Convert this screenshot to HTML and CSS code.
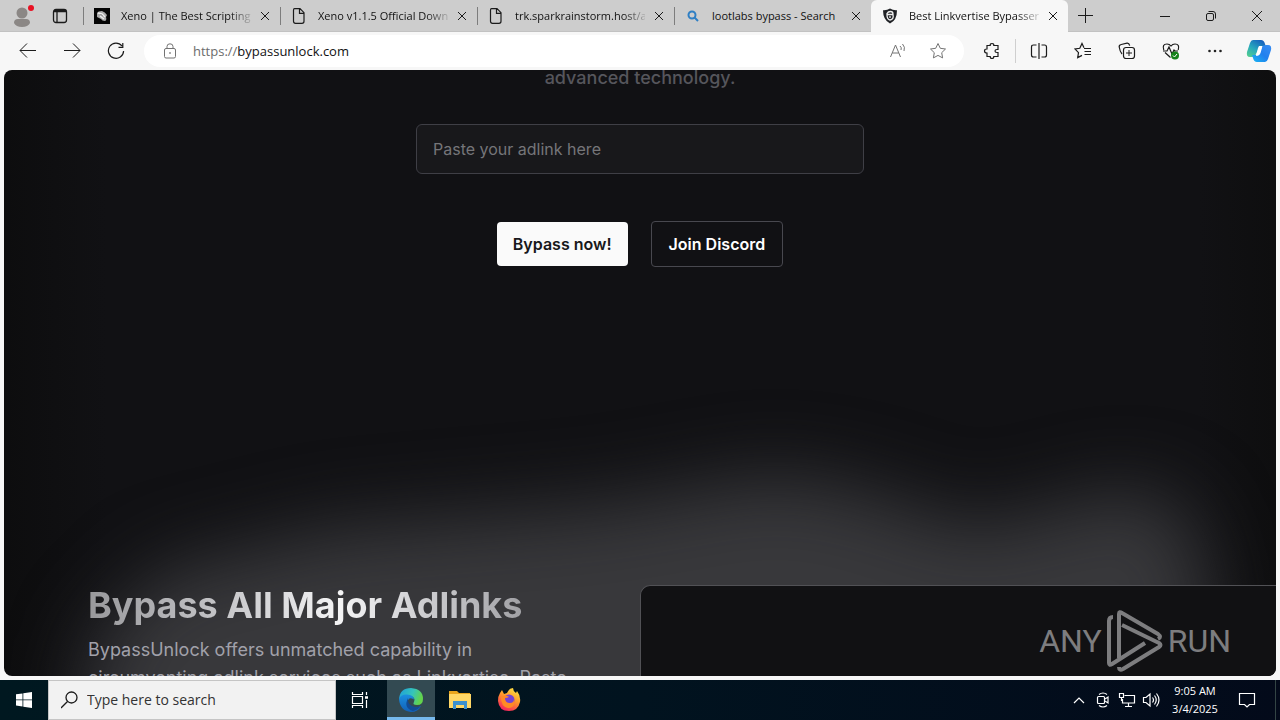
FILE: index.html
```html
<!DOCTYPE html>
<html lang="en">
<head>
<meta charset="utf-8">
<title>Best Linkvertise Bypasser</title>
<link rel="stylesheet" href="styles.css">
</head>
<body>
<header class="tabstrip">
  <button class="profile" aria-label="Profile"><svg width="24" height="28" viewBox="0 0 24 28"><circle cx="12" cy="11" r="5.500" fill="#8b8785"/><path d="M4 21q0-4 4-4h8q4 0 4 4-2 4-8 4t-8-4z" fill="#8b8785"/><circle cx="21" cy="6" r="3" fill="#e81123"/></svg></button>
  <button class="workspace" aria-label="Tab actions"><svg class="ln" width="16" height="16" viewBox="0 0 16 16"><rect x="1.500" y="1.500" width="13" height="13" rx="2.500" stroke-width="1.300"/><path d="M2 3h12" stroke-width="2.500"/><path d="M5 4v10" stroke-width="1.300"/></svg></button>
  <nav class="tabs">
    <div class="tab"><svg width="16" height="16" viewBox="0 0 16 16"><path fill="#050505" d="M0 0h16v16H0z"/><path fill="#aaa" d="M3 5q1-2 5-2 3 1 5 4l-1 2q1 3-1 4-3 0-4-2l-4-2z"/><path stroke="#eee" stroke-width="1.500" d="M4 5l4 1 3 3M6 8l4 3"/></svg><span class="title">Xeno | The Best Scripting</span><button class="close" aria-label="Close tab"><svg class="ln" width="10" height="10" viewBox="0 0 10 10"><path d="M1 1l8 8M9 1L1 9"/></svg></button></div>
    <div class="tab"><svg class="ln" width="16" height="16" viewBox="0 0 16 16"><path stroke-width="1.200" d="M3.500.700h5.500l4 4v8.600q0 2-2 2H4.500q-2 0-2-2v-11q0-1.600 1-1.600zM8.500 1v4.300H13"/></svg><span class="title">Xeno v1.1.5 Official Down</span><button class="close" aria-label="Close tab"><svg class="ln" width="10" height="10" viewBox="0 0 10 10"><path d="M1 1l8 8M9 1L1 9"/></svg></button></div>
    <div class="tab"><svg class="ln" width="16" height="16" viewBox="0 0 16 16"><path stroke-width="1.200" d="M3.500.700h5.500l4 4v8.600q0 2-2 2H4.500q-2 0-2-2v-11q0-1.600 1-1.600zM8.500 1v4.300H13"/></svg><span class="title">trk.sparkrainstorm.host/a</span><button class="close" aria-label="Close tab"><svg class="ln" width="10" height="10" viewBox="0 0 10 10"><path d="M1 1l8 8M9 1L1 9"/></svg></button></div>
    <div class="tab"><svg width="16" height="16" viewBox="0 0 16 16" fill="none" stroke="#2f7fc4" stroke-width="2"><circle cx="7" cy="7" r="3.500"/><path d="M9.500 9.500L13 13"/></svg><span class="title">lootlabs bypass - Search</span><button class="close" aria-label="Close tab"><svg class="ln" width="10" height="10" viewBox="0 0 10 10"><path d="M1 1l8 8M9 1L1 9"/></svg></button></div>
    <div class="tab active"><svg width="16" height="16" viewBox="0 0 16 16"><path fill="#202226" d="M8 .500Q11 2.500 15 2.200q0 10-7 13.300Q1 12 1 2.200 5 2.500 8 .500z"/><path fill="none" stroke="#eee" stroke-width="1.300" d="M5 6V5.500Q6 3.500 8.500 3.500t2.500 2.500M5 6.500h6q1 5-3 5.500-3-.5-3-5.500zM8 8v2"/></svg><span class="title">Best Linkvertise Bypasser</span><button class="close" aria-label="Close tab"><svg class="ln" width="10" height="10" viewBox="0 0 10 10"><path d="M1 1l8 8M9 1L1 9"/></svg></button></div>
  </nav>
  <button class="newtab" aria-label="New tab"><svg class="ln" width="15" height="15" viewBox="0 0 15 15"><path d="M7.500 0v15M0 7.500h15"/></svg></button>
  <div class="winctl">
    <button aria-label="Minimize"><svg class="ln" width="10" height="10" viewBox="0 0 10 10"><path d="M0 5.500h10"/></svg></button>
    <button aria-label="Restore"><svg class="ln" width="10" height="10" viewBox="0 0 10 10"><rect x=".5" y="2.500" width="7" height="7" rx="1.500"/><path d="M2.500.500H7Q9.500.500 9.500 3v4.500"/></svg></button>
    <button aria-label="Close"><svg class="ln" width="10" height="10" viewBox="0 0 10 10"><path d="M0 0l10 10M10 0L0 10"/></svg></button>
  </div>
</header>

<div class="toolbar">
  <button aria-label="Back"><svg class="ln" width="18" height="18" viewBox="0 0 18 18"><path d="M17 8.500H1M8 1.500l-7 7 7 7"/></svg></button>
  <button aria-label="Forward"><svg class="ln" width="18" height="18" viewBox="0 0 18 18"><path d="M1 8.500h16M10 1.500l7 7-7 7"/></svg></button>
  <button aria-label="Refresh"><svg class="ln" width="18" height="18" viewBox="0 0 18 18"><path stroke-width="1.200" d="M15 4A7.600 7.600 0 1 0 16.600 9M15.800 1v4.300h-4.300"/></svg></button>
  <div class="address">
    <svg class="ln grey" width="14" height="16" viewBox="0 0 14 16"><rect x="1.500" y="5.500" width="11" height="9.500" rx="1.500"/><path d="M4 5V3.500Q4 .800 7 .800t3 2.700V5"/><circle cx="7" cy="10" r=".5"/></svg>
    <div class="url"><span>https://</span>bypassunlock.com</div>
    <button aria-label="Read aloud"><svg class="ln grey" width="18" height="18" viewBox="0 0 18 18"><path d="M1.500 15L6.500 3l5 12M3.300 11h6.500M11 4q2 1.500 1 4M13.500 2q3 3 1.500 7"/></svg></button>
    <button aria-label="Favorite"><svg class="ln grey" width="18" height="18" viewBox="0 0 18 18"><path d="M9 1.500l2.300 4.800 5.200.700-3.800 3.700.900 5.200L9 13.400l-4.600 2.500.9-5.200L1.500 7l5.200-.7z"/></svg></button>
  </div>
  <div class="tools">
    <button class="ext" aria-label="Extensions"><svg class="ln" width="18" height="18" viewBox="0 0 18 18"><path stroke-width="1.200" d="M4 3.500h3.200Q7 1.500 9 1.500t1.800 2H15v4h-1q-2 0-2 1.500t2 1.500h1v4h-4.200q0 2-1.800 2t-1.800-2H4V11Q1.500 11 1.500 9T4 7z"/></svg></button>
    <button aria-label="Split screen"><svg class="ln" width="18" height="18" viewBox="0 0 18 18"><path stroke-width="1.200" d="M6.500 3H3.500Q1.500 3 1.500 5v8q0 2 2 2h3M11.500 3h3q2 0 2 2v8q0 2-2 2h-3M9 1v16"/></svg></button>
    <button aria-label="Favorites"><svg class="ln" width="18" height="18" viewBox="0 0 18 18"><path stroke-width="1.200" d="M10 5.700L8 1.500 5.800 6.300l-4.800.7 3.500 3.700-.8 4.900L8 13.400M10 6.500h7M10.500 9.500H17M10.500 12.500H17"/></svg></button>
    <button aria-label="Collections"><svg class="ln" width="18" height="18" viewBox="0 0 18 18"><path stroke-width="1.200" d="M4 12Q2 10 1.200 5q-.3-2 2-2.500L9 1.200q2-.3 2.700 2.500"/><rect x="5.500" y="5.500" width="11" height="11" rx="2.500" stroke-width="1.200"/><path d="M11 8v6M8 11h6"/></svg></button>
    <button aria-label="Browser essentials"><svg class="ln" width="18" height="18" viewBox="0 0 18 18"><path stroke-width="1.200" d="M1.800 8Q-.200 2 5 2q2.500 0 4 2 1.500-2 4-2 5 0 3.200 6M3 10.500l5.500 5M1 9h4l2-4 3 7 2-4 1 1h3"/><circle cx="13" cy="13.500" r="4" fill="#16811b" stroke="none"/><path stroke="#fff" d="M11 13.500l1.500 1.500 2.500-3"/></svg></button>
    <button aria-label="More"><svg width="18" height="18" viewBox="0 0 18 18"><g fill="#222"><circle cx="3.500" cy="9" r="1.300"/><circle cx="9" cy="9" r="1.300"/><circle cx="14.500" cy="9" r="1.300"/></g></svg></button>
    <button class="copilot" aria-label="Copilot"><svg width="26" height="24" viewBox="0 0 26 24"><defs><linearGradient id="ca" x1="0" y1="1" x2=".7" y2="0"><stop offset="0" stop-color="#58d28a"/><stop offset=".5" stop-color="#28a9bd"/><stop offset="1" stop-color="#1762bd"/></linearGradient><linearGradient id="cb" x1="0" y1="1" x2="1" y2="0"><stop offset="0" stop-color="#19b6f2"/><stop offset=".5" stop-color="#2180ee"/><stop offset="1" stop-color="#3a8df3"/></linearGradient></defs><path fill="url(#ca)" d="M7 1h8q3 0 4 4l1 3h-4q-3 0-4 3l-2 4q-1 3-4 3H4q-4 0-3-5L4 4q1-3 3-3z"/><path fill="url(#cb)" d="M19 23h-8q-3 0-4-4l-1-3h4q3 0 4-3l2-5q1-2 4-2h2q4 0 3 5l-3 9q-1 3-3 3z"/><path fill="#fff" d="M13 7h3.500l-2 7q-1 3-4.500 3l2-8z"/></svg></button>
  </div>
</div>

<main class="page">
  <svg class="glow" viewBox="0 0 1272 606" preserveAspectRatio="none" aria-hidden="true"><defs><filter id="soft" x="-20%" y="-50%" width="140%" height="200%" color-interpolation-filters="sRGB"><feGaussianBlur stdDeviation="38"/></filter></defs><path filter="url(#soft)" fill="#38383b" d="M60 800L90 570 160 500 330 458 600 435 770 405 850 418 970 458 1130 418 1185 445 1205 530 1195 800z"/></svg>
  <section class="hero">
    <p class="lead">advanced technology.</p>
    <input class="link" type="text" placeholder="Paste your adlink here" aria-label="Adlink">
    <div class="actions"><button class="primary">Bypass now!</button><button class="outline">Join Discord</button></div>
  </section>
  <section class="feature">
    <div class="copy">
      <h2>Bypass All Major Adlinks</h2>
      <p>BypassUnlock offers unmatched capability in circumventing adlink services such as Linkvertise. Paste</p>
    </div>
    <div class="card">
      <div class="brand"><span>ANY</span><svg width="58" height="64" viewBox="0 0 58 64" fill="none" stroke="#7d7d7f" stroke-width="4" stroke-linejoin="round"><path d="M7 8Q3 8 3 12v42q0 3 3 1L39 34"/><path d="M13 49V5q0-3 3-1l36 21q4 3 0 5"/><path d="M16 16l37 18q3 2 0 4L17 60q-4 2-4-2"/></svg><span>RUN</span></div>
    </div>
  </section>
</main>

<footer class="taskbar">
  <button class="app" aria-label="Start"><svg width="16" height="16" viewBox="0 0 16 16" fill="#fff"><path d="M0 2.300L6.500 1.400v6.100H0zM7.300 1.300L16 0v7.500H7.300zM0 8.300h6.500v6.200L0 13.600zM7.300 8.300H16V16l-8.700-1.300z"/></svg></button>
  <label class="search"><svg class="ln" width="18" height="18" viewBox="0 0 18 18"><circle cx="10.500" cy="6.500" r="5.500" stroke-width="1.300"/><path stroke-width="1.300" d="M6.500 10.500L0 17"/></svg><input type="text" placeholder="Type here to search" aria-label="Type here to search"></label>
  <button class="app" aria-label="Task view"><svg width="18" height="18" viewBox="0 0 18 18" fill="none" stroke="#fff" stroke-width="1.200"><path d="M1.500 1v2.500h10V1M1.500 17v-2.500h10V17M1.500 5.500h10v7h-10zM15.500 1v3M15.500 9v8"/><path stroke-width="2.500" d="M14 6.500h3"/></svg></button>
  <button class="app current" aria-label="Edge"><svg width="26" height="26" viewBox="0 0 26 26"><defs><linearGradient id="ea" x1="0" y1="0" x2="1" y2=".3"><stop offset="0" stop-color="#1d9ddb"/><stop offset=".6" stop-color="#35c4bb"/><stop offset="1" stop-color="#62d34d"/></linearGradient><linearGradient id="eb" x1="0" y1="0" x2="0" y2="1"><stop offset="0" stop-color="#1b8fe0"/><stop offset="1" stop-color="#1260b6"/></linearGradient></defs><path fill="url(#ea)" d="M1 12Q2 1 13 1q12 1 12 11 0 6-6 6-5 0-3-3 2-5-4-6-6 0-11 3z"/><path fill="url(#eb)" d="M1 12Q3 7 9 7.500q7 .500 7 5-5-3-6 1-1 5 5 6.500 4 1 8-1-3 6-10 6Q2 24 1 12z"/><path fill="#124b94" d="M10 11q-5 10 5 13 5-1 8-5-5 2-9 0-5-3-4-8z"/></svg></button>
  <button class="app" aria-label="File Explorer"><svg width="24" height="22" viewBox="0 0 24 22"><path fill="#e9a51d" d="M1 2h8l2 2h11v4H1z"/><path fill="#ffd766" d="M1 5h22v14H1z"/><path fill="#3c91cf" d="M5 12h14v8h-3v-4H8v4H5z"/></svg></button>
  <button class="app" aria-label="Firefox"><svg width="24" height="24" viewBox="0 0 24 24"><defs><linearGradient id="ff" x1=".8" y1="0" x2=".3" y2="1"><stop offset="0" stop-color="#ffe545"/><stop offset=".45" stop-color="#ff9a2a"/><stop offset="1" stop-color="#f5205f"/></linearGradient></defs><path fill="url(#ff)" d="M3 5l2-3 2 4 3-1q2-5 6-5 0 3 3 5l1-2q4 5 3 11-2 9-11 9Q2 23 1 13 1 8 3 5z"/><circle cx="12" cy="12" r="5.500" fill="#7542d3"/><path fill="#ff8a25" d="M4 9q5-3 8 0-2 1-4 1 0 5 5 5 4 0 4-4 2 9-6 9-7-1-7-11z"/></svg></button>
  <div class="tray">
    <button aria-label="Show hidden icons"><svg width="12" height="8" viewBox="0 0 12 8"><path d="M1 7l5-5 5 5"/></svg></button>
    <button aria-label="Camera"><svg width="14" height="16" viewBox="0 0 14 16"><rect x="1.500" y="4.500" width="7" height="7" rx="1"/><path d="M9 7l3-2v6L9 9M3 2.500q4-3 8 0M3 13.500q4 3 8 0"/></svg></button>
    <button aria-label="Network"><svg width="18" height="16" viewBox="0 0 18 16"><path d="M6.500 3.500h10v7.500H4.500V7M10.500 11v3.500M7 14.500h7M1.500 1.500h4v4h-4zM3.500 5.500V9"/></svg></button>
    <button aria-label="Volume"><svg width="18" height="16" viewBox="0 0 18 16"><path d="M1.500 5.500H4l4-3.500v12l-4-3.500H1.500zM10.500 5.500q2 2.500 0 5M12.500 3.500q3.500 4.500 0 9M14.500 1.500q5 6.500 0 13"/></svg></button>
    <div class="clock"><span>9:05 AM</span><span>3/4/2025</span></div>
    <button class="notes" aria-label="Notifications"><svg width="18" height="18" viewBox="0 0 18 18"><path d="M1.500 2.500h15v11h-5L9 16l-2.500-2.500h-5z"/></svg></button>
  </div>
</footer>
</body>
</html>
```
FILE: styles.css
```css
* { box-sizing: border-box; }
body {
  margin: 0;
  height: 100vh;
  display: flex;
  flex-direction: column;
  overflow: hidden;
  background: #f7f7f7;
  font: 11px/16px "Open Sans", "Noto Sans", sans-serif;
  color: #111;
}
button {
  display: flex;
  align-items: center;
  justify-content: center;
  padding: 0;
  border: 0;
  background: none;
  font: inherit;
  color: inherit;
}
svg { flex: none; }
.ln { fill: none; stroke: #1b1b1b; }
.grey { stroke: #737373; }

.tabstrip { display: flex; height: 32px; background: #cdcdcd; border-bottom: 1px solid #c2c2c2; }
.profile { width: 44px; }
.workspace { width: 32px; }
.tabs { display: flex; flex: 0 1 985px; margin-left: 7px; min-width: 0; }
.tab {
  position: relative;
  display: flex;
  align-items: center;
  flex: 1;
  min-width: 0;
  padding: 0 7px 0 11px;
}
.tab:not(.active)::before {
  content: "";
  position: absolute;
  left: 0;
  top: 7px;
  width: 1px;
  height: 18px;
  background: #7d7d7d;
}
.tab.active { height: 32px; border-radius: 6px 6px 0 0; background: #f7f7f7; }
.title {
  flex: 1;
  min-width: 0;
  margin-left: 11px;
  white-space: nowrap;
  mask-image: linear-gradient(to right, #000 108px, transparent 134px);
}
.tab:nth-child(4) .title { mask-image: none; }
.close { width: 16px; height: 16px; margin-left: 6px; }
.newtab { width: 34px; }
.winctl { display: flex; margin-left: auto; }
.winctl button { width: 46px; }

.toolbar { display: flex; align-items: center; height: 38px; padding-left: 6px; }
.toolbar > button { width: 44px; height: 36px; }
.address {
  display: flex;
  align-items: center;
  flex: 1;
  height: 32px;
  margin-left: 6px;
  padding: 0 6px 0 19px;
  border-radius: 16px;
  background: #fff;
}
.url { flex: 1; margin-left: 16px; font-size: 13px; color: #111; }
.url span { color: #6c6c6c; }
.address button { width: 40px; }
.tools { display: flex; margin-left: 5px; }
.tools button { width: 44px; height: 24px; }
.tools .ext { width: 47px; margin-right: 1px; border-right: 1px solid #cfcfcf; }
.tools .copilot { width: 43px; }

.page {
  position: relative;
  flex: 1;
  min-height: 0;
  margin: 0 4px 4px;
  overflow: hidden;
  border-radius: 8px;
  background: linear-gradient(90deg, #0d0d0e, #111114 8%, #111114 94%, #0e0e0f);
  font-family: Inter, Roboto, sans-serif;
}
.glow { position: absolute; inset: 0; width: 100%; height: 100%; }
.hero, .feature { position: relative; }
.hero { display: flex; flex-direction: column; align-items: center; }
.lead { margin: 0; font-size: 18px; line-height: 16px; font-weight: 500; color: #56565c; }
.link {
  width: 448px;
  height: 50px;
  margin-top: 38px;
  padding: 0 16px;
  border: 1px solid #3f3f46;
  border-radius: 6px;
  background: #18181b;
  font: 16px/24px Inter, Roboto, sans-serif;
  color: #fafafa;
}
.link::placeholder { color: #757579; }
.actions { display: flex; align-items: center; gap: 23px; margin-top: 47px; }
.actions button { height: 44px; padding: 0 16px; border-radius: 4px; font-size: 16px; font-weight: 600; }
.actions .primary { background: #fafafa; color: #18181b; }
.actions .outline { height: 46px; padding: 0 17px; border: 1px solid #48484f; color: #fff; }

.feature { display: grid; grid-template-columns: 1fr 1fr; margin-top: 318px; }
.copy { padding-left: 84px; }
.copy h2 {
  width: fit-content;
  margin: 0 0 11px;
  font-size: 36px;
  line-height: 40px;
  font-weight: 700;
  background: linear-gradient(90deg, #98989b, #c4c4c7 30%, #f4f4f5 58%, #c9c9cc 80%, #a1a1a5);
  background-clip: text;
  color: transparent;
}
.copy p { max-width: 490px; margin: 0; font-size: 18px; line-height: 28px; color: #a1a1aa; }
.card {
  min-height: 180px;
  padding: 23px 45px 0 0;
  border: 1px solid #515155;
  border-right: 0;
  border-radius: 10px 0 0 0;
  background: #111113;
}
.brand { display: flex; justify-content: flex-end; align-items: center; gap: 4px; font: 32px/64px Roboto, sans-serif; color: #7d7d7f; }

.taskbar { display: flex; height: 40px; background: linear-gradient(90deg, #001820, #01131f 50%, #030a1a); color: #fff; }
.app { width: 48px; margin-right: 1px; }
.app:first-child { margin-right: 0; }
.current { margin-left: 2px; border-bottom: 3px solid #76b9ed; padding-top: 3px; background: #334a52; }
.search { display: flex; align-items: center; width: 288px; padding-left: 12px; border: 1px solid #c5c5c5; background: #f2f2f2; }
.search input { flex: 1; min-width: 0; margin-left: 8px; padding: 0; border: 0; background: none; font: 14px/20px "Open Sans", sans-serif; }
.search input::placeholder { color: #333; }
.tray { display: flex; margin-left: auto; padding-right: 4px; }
.tray button { width: 24px; }
.tray svg { fill: none; stroke: #fff; stroke-width: 1.2; }
.clock { display: flex; flex-direction: column; justify-content: center; width: 64px; line-height: 18px; text-align: center; }
.tray .notes { width: 49px; padding-right: 8px; border-right: 1px solid #344; }
```
